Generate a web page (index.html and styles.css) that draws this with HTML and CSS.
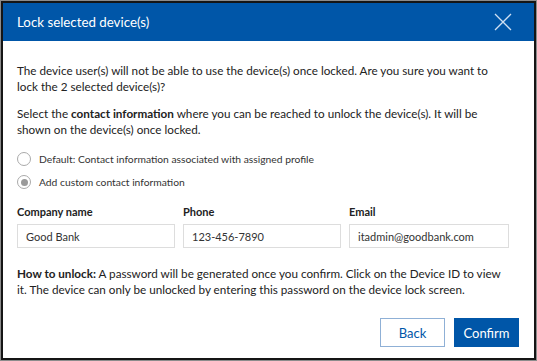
FILE: index.html
```html
<!DOCTYPE html>
<html>
<head>
<meta charset="utf-8">
<link rel="stylesheet" href="styles.css">
</head>
<body>
<div class="dialog">
  <div class="header">
    <span class="title">Lock selected device(s)</span>
    <svg class="close" width="18" height="18" viewBox="0 0 18 18"><path d="M1 1L17 17M17 1L1 17" stroke="#cfe0f3" stroke-width="1.3" fill="none"/></svg>
  </div>
  <div class="body">
    <p class="para">The device user(s) will not be able to use the device(s) once locked. Are you sure you want to lock the 2 selected device(s)?</p>
    <p class="para p2">Select the <b>contact information</b> where you can be reached to unlock the device(s). It will be shown on the device(s) once locked.</p>
    <div class="radios">
      <div class="radio"><span class="dot"></span>Default: Contact information associated with assigned profile</div>
      <div class="radio"><span class="dot on"></span>Add custom contact information</div>
    </div>
    <div class="fields">
      <div class="field"><div class="label">Company name</div><div class="input">Good Bank</div></div>
      <div class="field"><div class="label">Phone</div><div class="input">123-456-7890</div></div>
      <div class="field"><div class="label">Email</div><div class="input">itadmin@goodbank.com</div></div>
    </div>
    <p class="para p3"><b>How to unlock:</b> A password will be generated once you confirm. Click on the Device ID to view it. The device can only be unlocked by entering this password on the device lock screen.</p>
    <div class="actions">
      <button class="btn back">Back</button>
      <button class="btn confirm">Confirm</button>
    </div>
  </div>
</div>
</body>
</html>
```
FILE: styles.css
```css
html { background: #8c8c8c; }
body { margin: 1px; font-family: Lato, "Noto Sans", sans-serif; color: #222; }
.dialog {
  border: 2px solid #151515;
  background: #fff;
  box-sizing: border-box;
  height: 359px;
  display: flex;
  flex-direction: column;
}
.header {
  background: #0056a8;
  height: 38px;
  display: flex;
  align-items: center;
  justify-content: space-between;
  padding: 0 22px 0 14px;
}
.title { color: #fff; font-size: 13.3px; }
.close { display: block; }
.body { padding: 21px 14px 0 14px; flex: 1; display: flex; flex-direction: column; }
.para { margin: 0; padding-right: 13px; font-size: 11.7px; line-height: 16px; }
.p2 { margin-top: 11px; }
.radios { margin-top: 14px; display: flex; flex-direction: column; gap: 7px; }
.radio { display: flex; align-items: center; font-size: 10.3px; color: #333; height: 16px; }
.dot { width: 14px; height: 14px; border: 1px solid #aaa; border-radius: 50%; margin-right: 8px; box-sizing: border-box; display: flex; align-items: center; justify-content: center; }
.dot.on::after { content: ""; width: 7px; height: 7px; border-radius: 50%; background: #9a9a9a; }
.fields { margin-top: 15px; display: flex; gap: 8px; }
.field { width: 158px; }
.field:last-child { width: 160px; }
.label { font-size: 11px; font-weight: bold; color: #222; height: 15px; }
.input { margin-top: 4px; height: 24px; border: 1px solid #ddd; box-sizing: border-box; font-size: 11px; display: flex; align-items: center; padding: 0 8px; color: #333; }
.p3 { margin-top: 17px; }
.actions { margin-top: auto; margin-bottom: 11px; display: flex; justify-content: flex-end; gap: 9px; padding-right: 1px; }
.btn { width: 65px; height: 29px; font-family: Lato, "Noto Sans", sans-serif; font-size: 13px; border: 1px solid #0056a8; }
.back { background: #fff; color: #0056a8; border-color: #8fb0d6; }
.confirm { background: #0056a8; color: #fff; }
```
